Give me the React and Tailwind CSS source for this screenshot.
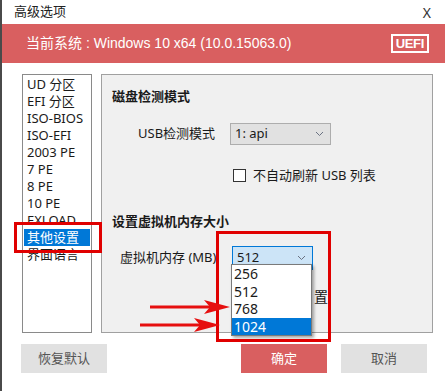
import React from 'react';

const font = { fontFamily: '"Noto Sans", "Noto Sans CJK SC", sans-serif' };
const bannerFont = { fontFamily: '"Liberation Sans", "Noto Sans CJK SC", sans-serif' };

const items = ['UD 分区', 'EFI 分区', 'ISO-BIOS', 'ISO-EFI', '2003 PE', '7 PE', '8 PE', '10 PE', 'EXLOAD', '其他设置', '界面语言'];

const Chevron = () => (
  <svg width="9" height="6" viewBox="0 0 9 6" className="text-gray-500">
    <path d="M1 1l3.5 3.5L8 1" fill="none" stroke="currentColor" strokeWidth="1" />
  </svg>
);

const Arrow = ({ className }) => (
  <svg width="80" height="14" viewBox="0 0 80 14" className={className}>
    <path d="M0 7h60" stroke="#e60f0f" strokeWidth="3" />
    <path d="M54 0l26 7-26 7 6-7z" fill="#e60f0f" />
  </svg>
);

const App = () => {
  return (
    <div className="relative w-[445px] h-[391px] bg-white border-l-2 border-[#4a4a4a] overflow-hidden text-[13px] text-[#1a1a1a]" style={font}>
      {/* title */}
      <div className="h-[24px] flex items-center justify-between pl-[12px] pr-[14px]">
        <span className="text-[13px] text-[#222]">高级选项</span>
        <span className="text-[14px] text-[#333]">X</span>
      </div>

      {/* banner */}
      <div className="h-[39px] bg-[#d95f60] flex items-center justify-between pl-[24px] pr-[16px] text-white">
        <span className="text-[14px]" style={bannerFont}>当前系统 : Windows 10 x64 (10.0.15063.0)</span>
        <span className="border-2 border-white px-[3px] h-[19px] leading-[15px] text-[13px] font-bold tracking-tight" style={bannerFont}>UEFI</span>
      </div>

      {/* body */}
      <div className="flex mt-[11px] pl-[20px] gap-[9px]">
        <div className="w-[70px] h-[259px] border border-[#8a8a8a] bg-white pt-[1px] px-[1px]">
          {items.map((it) => (
            <div
              key={it}
              className={`h-[17px] leading-[17px] pl-[3px] text-[13px] ${it === '其他设置' ? 'bg-[#0078d7] text-white' : ''}`}
            >
              {it}
            </div>
          ))}
        </div>

        <div className="w-[332px] h-[259px] bg-[#f0f0f0] border border-[#a0a0a0] pl-[10px] pt-[12px]">
          <div className="font-bold text-[13px] leading-[18px]">磁盘检测模式</div>
          <div className="flex items-center mt-[18px] pl-[26px]">
            <span className="w-[92px]">USB检测模式</span>
            <div className="w-[101px] h-[22px] bg-[#e1e1e1] border border-[#adadad] flex items-center justify-between pl-[4px] pr-[6px]">
              <span>1: api</span>
              <Chevron />
            </div>
          </div>
          <div className="flex items-center mt-[21px] pl-[121px] gap-[7px]">
            <span className="w-[13px] h-[13px] border border-[#333] bg-white" />
            <span>不自动刷新 USB 列表</span>
          </div>

          <div className="font-bold text-[13px] leading-[18px] mt-[26px]">设置虚拟机内存大小</div>
          <div className="flex items-center mt-[16px] pl-[8px]">
            <span className="w-[112px]">虚拟机内存 (MB)</span>
            <div className="w-[81px] h-[24px] bg-[#cce4f7] border border-[#0078d7] flex items-center justify-between pl-[4px] pr-[6px]">
              <span>512</span>
              <Chevron />
            </div>
          </div>
          {/* checkbox label mostly hidden by the open list; only its last char shows */}
          <div className="mt-[18px] pl-[202px] text-[14px] leading-[18px]">置</div>
        </div>
      </div>

      {/* buttons */}
      <div className="flex mt-[11px] pl-[19px]">
        <div className="w-[86px] h-[29px] bg-[#e1e1e1] flex items-center justify-center text-[#555]">恢复默认</div>
        <div className="w-[86px] h-[29px] bg-[#d95f60] flex items-center justify-center text-white ml-[134px]">确定</div>
        <div className="w-[86px] h-[29px] bg-[#e1e1e1] flex items-center justify-center text-[#555] ml-[14px]">取消</div>
      </div>

      {/* dropdown list overlay */}
      <div className="absolute left-[229px] top-[264px] w-[81px] bg-white border border-[#7a7a7a] shadow-[2px_2px_3px_rgba(0,0,0,0.35)] text-[14px]">
        {['256', '512', '768', '1024'].map((v) => (
          <div key={v} className={`h-[17.5px] leading-[17px] pl-[2px] ${v === '1024' ? 'bg-[#0078d7] text-white' : ''}`}>{v}</div>
        ))}
      </div>

      {/* annotations */}
      <div className="absolute left-[12px] top-[222px] w-[88px] h-[31px] border-[3px] border-[#e00000]" />
      <div className="absolute left-[214px] top-[231px] w-[115px] h-[111px] border-[3px] border-[#e00000]" />
      <Arrow className="absolute left-[148px] top-[300px]" />
      <Arrow className="absolute left-[138px] top-[318px]" />
    </div>
  );
};

export default App;
